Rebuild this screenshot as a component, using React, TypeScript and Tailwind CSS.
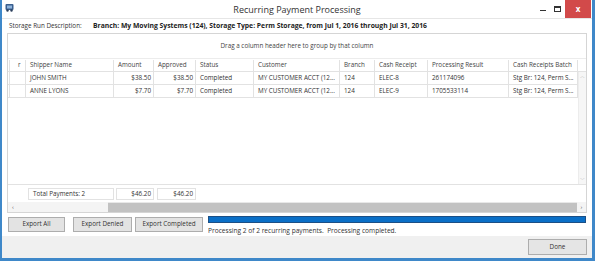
import React from "react";

const cols = [
  { w: 16, h: "r", align: "left" },
  { w: 88, h: "Shipper Name", align: "left" },
  { w: 40, h: "Amount", align: "right" },
  { w: 42, h: "Approved", align: "right" },
  { w: 58, h: "Status", align: "left" },
  { w: 86, h: "Customer", align: "left" },
  { w: 35, h: "Branch", align: "left" },
  { w: 53, h: "Cash Receipt", align: "left" },
  { w: 81, h: "Processing Result", align: "left" },
  { w: 69, h: "Cash Receipts Batch", align: "left" },
];

const rows = [
  ["", "JOHN SMITH", "$38.50", "$38.50", "Completed", "MY CUSTOMER ACCT (12...", "124", "ELEC-8", "261174096", "Stg Br: 124, Perm S..."],
  ["", "ANNE LYONS", "$7.70", "$7.70", "Completed", "MY CUSTOMER ACCT (12...", "124", "ELEC-9", "1705533114", "Stg Br: 124, Perm S..."],
];

function Cell({ w, text, align, header, first }: { w: number; text: string; align: string; header?: boolean; first?: boolean }) {
  return (
    <div
      style={{ width: w }}
      className={
        "shrink-0 h-full flex items-center border-r border-[#e2e2e2] overflow-hidden whitespace-nowrap " +
        (align === "right" ? "justify-end pr-[2px]" : first ? "justify-start pl-[8px]" : "justify-start pl-[4px]") +
        (header ? " text-[#444]" : " text-[#333]")
      }
    >
      {text}
    </div>
  );
}

export default function App() {
  return (
    <div className="w-[595px] h-[261px] bg-[#3f88c9] pl-[2px] pr-[3px] pt-0 pb-[3px] flex flex-col font-['Open_Sans',sans-serif] text-[6.3px] leading-none">
      {/* title bar */}
      <div className="h-[19px] bg-white flex items-center relative shrink-0 border-b border-[#e6e6e6]">
        <svg className="absolute left-[3px] top-[3px]" width="9" height="9" viewBox="0 0 9 9">
          <rect x="0.5" y="1" width="8" height="6" rx="1" fill="#3a5f8f" />
          <rect x="2" y="2.5" width="5" height="3" fill="#8fb4dc" />
          <circle cx="2.5" cy="7.5" r="1.2" fill="#2b3f5c" />
          <circle cx="6.5" cy="7.5" r="1.2" fill="#2b3f5c" />
        </svg>
        <div className="flex-1 text-center text-[9px] text-[#333] pt-[1px]">Recurring Payment Processing</div>
        <div className="absolute right-[1px] top-0 h-[18px] flex items-center">
          <div className="w-[6px] h-[1.5px] bg-[#333] mt-[3px] mr-[8px]" />
          <div className="w-[7px] h-[6px] border border-[#333] border-t-2 mr-[4px]" />
          <div className="w-[26px] h-[18px] bg-[#d24a4a] flex items-center justify-center text-white text-[8px] font-bold">x</div>
        </div>
      </div>

      {/* client */}
      <div className="flex-1 flex flex-col bg-white">
        <div className="h-[14px] flex items-center pl-[7px] text-[#333] shrink-0">
          <span className="w-[84px] shrink-0">Storage Run Description:</span>
          <span className="font-bold text-[#222] text-[6.8px] whitespace-nowrap">
            Branch: My Moving Systems (124), Storage Type: Perm Storage, from Jul 1, 2016 through Jul 31, 2016
          </span>
        </div>

        {/* grid */}
        <div className="ml-[5px] w-[580px] h-[180px] border border-[#d5d5d5] flex flex-col shrink-0">
          <div className="h-[25px] flex items-center justify-center text-[#444] shrink-0 border-b border-[#ececec]">
            Drag a column header here to group by that column
          </div>
          {/* header */}
          <div className="h-[12px] flex shrink-0 border-b border-[#e2e2e2] mt-[1px]">
            <div className="w-[2px] h-full border-r border-[#e2e2e2] shrink-0" />
            {cols.map((c, i) => (
              <Cell key={i} w={c.w} text={c.h} align={i >= 2 && i <= 3 ? "left" : c.align} header first={i === 0} />
            ))}
          </div>
          {/* body */}
          <div className="flex-1 flex">
            <div className="flex-1 flex flex-col">
              {rows.map((r, ri) => (
                <div key={ri} className="h-[13px] flex border-b border-[#e2e2e2]">
                  <div className="w-[2px] h-full border-r border-[#e2e2e2] shrink-0" />
                  {cols.map((c, i) => (
                    <Cell key={i} w={c.w} text={r[i]} align={c.align} />
                  ))}
                </div>
              ))}
              <div className="flex-1" />
            </div>
            <div className="w-[9px] bg-[#f6f6f6] border-l border-[#ececec] flex flex-col items-center justify-between text-[#a8a8a8] text-[5px] py-[2px]">
              <span>︿</span>
              <span>﹀</span>
            </div>
          </div>
          {/* footer */}
          <div className="h-[18px] flex items-center shrink-0 border-t border-[#e2e2e2] pt-[1px]">
            <div className="w-[20px] shrink-0" />
            <div className="w-[86px] h-[12px] border border-[#e2e2e2] flex items-center pl-[4px] text-[#333] shrink-0">Total Payments: 2</div>
            <div className="w-[38px] h-[12px] ml-[2px] border border-[#e2e2e2] flex items-center justify-end pr-[2px] text-[#333] shrink-0">$46.20</div>
            <div className="w-[39px] h-[12px] ml-[3px] border border-[#e2e2e2] flex items-center justify-end pr-[2px] text-[#333] shrink-0">$46.20</div>
          </div>
          {/* h scrollbar */}
          <div className="h-[10px] flex items-center shrink-0 bg-[#e8e8e8] text-[#555] text-[6px]">
            <div className="w-[100px] pl-[4px] shrink-0 bg-[#f4f4f4] h-full flex items-center">‹</div>
            <div className="flex-1 h-[9px] bg-[#c2c2c2]" />
            <div className="w-[9px] h-full flex items-center justify-center bg-[#f4f4f4]">›</div>
          </div>
        </div>

        {/* buttons row */}
        <div className="flex pl-[6px] pt-[3px] shrink-0">
          <button className="w-[57px] h-[15px] mt-[1px] bg-[#e3e3e3] border border-[#adadad] text-[#333] text-[6.3px] shrink-0">Export All</button>
          <button className="w-[59px] h-[15px] mt-[1px] ml-[8px] bg-[#e3e3e3] border border-[#adadad] text-[#333] text-[6.3px] shrink-0">Export Denied</button>
          <button className="w-[68px] h-[15px] mt-[1px] ml-[3px] bg-[#e3e3e3] border border-[#adadad] text-[#333] text-[6.3px] shrink-0">Export Completed</button>
          <div className="ml-[5px] flex flex-col w-[378px]">
            <div className="h-[7px] bg-[#0a6fc7] border border-[#1c4f85]" />
            <div className="mt-[5px] text-[#333] text-[6.6px] whitespace-pre">Processing 2 of 2 recurring payments.  Processing completed.</div>
          </div>
        </div>

        <div className="flex-1" />
        {/* bottom bar */}
        <div className="h-[22px] bg-[#f0f0f0] flex items-center justify-end pr-[5px] shrink-0">
          <button className="w-[59px] h-[16px] bg-[#e5e5e5] border border-[#adadad] text-[#333] text-[6.3px]">Done</button>
        </div>
      </div>
    </div>
  );
}
